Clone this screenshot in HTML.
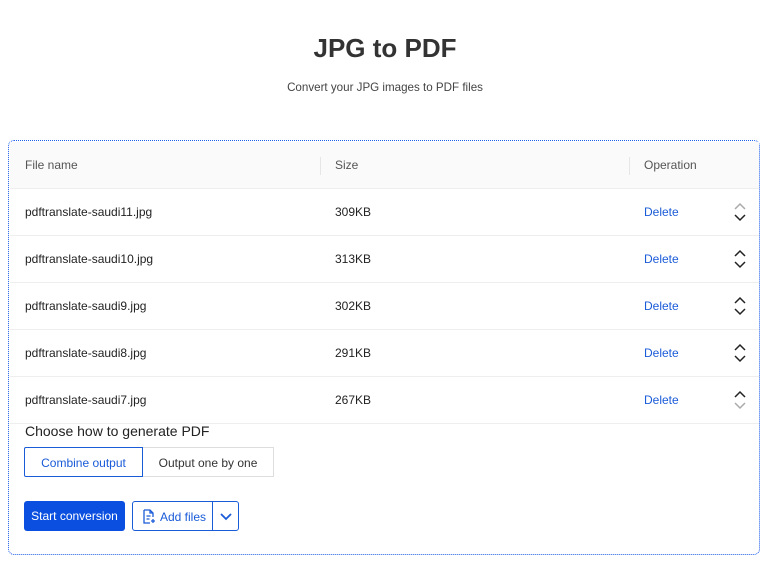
<!DOCTYPE html>
<html><head><style>
body{margin:0;width:770px;height:568px;background:#fff;font-family:"Liberation Sans",Arial,sans-serif;color:#333;position:relative;overflow:hidden}
h1{position:absolute;top:33px;left:0;width:770px;text-align:center;margin:0;font-size:26px;font-weight:bold;color:#333}
.sub{position:absolute;top:81px;width:770px;text-align:center;font-size:11.6px;color:#444}
.box{position:absolute;left:8px;top:140px;width:750px;height:413px;border:1px dotted #1d5ee8;border-radius:6px}
.hdr{position:absolute;left:1px;top:1px;width:749px;height:46px;background:#fafafa;border-bottom:1px solid #eee;font-size:12px;color:#555}
.row{position:absolute;left:1px;width:749px;height:46px;border-bottom:1px solid #eee;font-size:12px;color:#222}
.c{position:absolute;top:0;line-height:46px}
.sep{position:absolute;top:15px;width:1px;height:18px;background:#e6e6e6}
.del{color:#1a5bd8}
svg.ar{position:absolute;left:723px;top:13px}
.lbl{position:absolute;left:16px;top:282px;font-size:14px;color:#222}
.seg{position:absolute;top:306px;height:30px;line-height:30px;font-size:12px;text-align:center;box-sizing:border-box}
.btn{position:absolute;top:360px;height:30px;box-sizing:border-box;border-radius:3px;font-size:12px;line-height:30px}
</style></head><body>
<h1>JPG to PDF</h1>
<div class="sub">Convert your JPG images to PDF files</div>
<div class="box">
<div class="hdr"><span class="c" style="left:15px;line-height:47px">File name</span><div class="sep" style="left:310px"></div><span class="c" style="left:325px;line-height:47px">Size</span><div class="sep" style="left:619px"></div><span class="c" style="left:634px;line-height:47px">Operation</span></div>

<div class="row" style="top:48px"><span class="c" style="left:15px">pdftranslate-saudi11.jpg</span><span class="c" style="left:325px">309KB</span><span class="c del" style="left:634px">Delete</span><svg class="ar" width="14" height="20"><path d="M2 7l5-5 5 5" stroke="#aaa" stroke-width="1.5" fill="none"/><path d="M2 13l5 5 5-5" stroke="#222" stroke-width="1.5" fill="none"/></svg></div>
<div class="row" style="top:95px"><span class="c" style="left:15px">pdftranslate-saudi10.jpg</span><span class="c" style="left:325px">313KB</span><span class="c del" style="left:634px">Delete</span><svg class="ar" width="14" height="20"><path d="M2 7l5-5 5 5" stroke="#222" stroke-width="1.5" fill="none"/><path d="M2 13l5 5 5-5" stroke="#222" stroke-width="1.5" fill="none"/></svg></div>
<div class="row" style="top:142px"><span class="c" style="left:15px">pdftranslate-saudi9.jpg</span><span class="c" style="left:325px">302KB</span><span class="c del" style="left:634px">Delete</span><svg class="ar" width="14" height="20"><path d="M2 7l5-5 5 5" stroke="#222" stroke-width="1.5" fill="none"/><path d="M2 13l5 5 5-5" stroke="#222" stroke-width="1.5" fill="none"/></svg></div>
<div class="row" style="top:189px"><span class="c" style="left:15px">pdftranslate-saudi8.jpg</span><span class="c" style="left:325px">291KB</span><span class="c del" style="left:634px">Delete</span><svg class="ar" width="14" height="20"><path d="M2 7l5-5 5 5" stroke="#222" stroke-width="1.5" fill="none"/><path d="M2 13l5 5 5-5" stroke="#222" stroke-width="1.5" fill="none"/></svg></div>
<div class="row" style="top:236px"><span class="c" style="left:15px">pdftranslate-saudi7.jpg</span><span class="c" style="left:325px">267KB</span><span class="c del" style="left:634px">Delete</span><svg class="ar" width="14" height="20"><path d="M2 7l5-5 5 5" stroke="#222" stroke-width="1.5" fill="none"/><path d="M2 13l5 5 5-5" stroke="#aaa" stroke-width="1.5" fill="none"/></svg></div>

<div class="lbl">Choose how to generate PDF</div>
<div class="seg" style="left:15px;width:119px;border:1px solid #1a5bd8;color:#1a5bd8;border-radius:2px 0 0 2px">Combine output</div>
<div class="seg" style="left:134px;width:131px;border:1px solid #ddd;border-left:none;color:#333">Output one by one</div>

<div class="btn" style="left:15px;width:101px;background:#0b4fe0;color:#fff;text-align:center">Start conversion</div>
<div class="btn" style="left:123px;width:107px;border:1px solid #1a5bd8;color:#1a5bd8">
<svg style="position:absolute;left:9px;top:7px" width="14" height="15" viewBox="0 0 14 15"><path d="M2 1h6l3 3v4M2 1v13h6M8 1v3h3M4.5 7h4M4.5 10h3" stroke="#1a5bd8" stroke-width="1.3" fill="none"/><path d="M11 10v4M9 12h4" stroke="#1a5bd8" stroke-width="1.3"/></svg>
<span style="position:absolute;left:27px">Add files</span>
<div style="position:absolute;left:79px;top:0;width:1px;height:28px;background:#1a5bd8"></div>
<svg style="position:absolute;left:86px;top:10px" width="14" height="9"><path d="M2 2l5 5 5-5" stroke="#1a5bd8" stroke-width="1.8" fill="none"/></svg>
</div>
</div>
</body></html>
